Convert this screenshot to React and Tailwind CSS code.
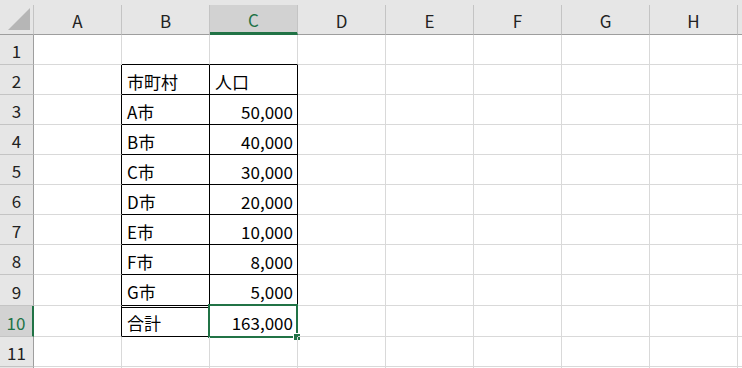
import React from "react";

const COLS = ["A", "B", "C", "D", "E", "F", "G", "H"];
const ROW_H = [30, 30, 30, 30, 30, 30, 30, 30, 31, 31, 30, 30];

const data = {
  2: ["市町村", "人口"],
  3: ["A市", "50,000"],
  4: ["B市", "40,000"],
  5: ["C市", "30,000"],
  6: ["D市", "20,000"],
  7: ["E市", "10,000"],
  8: ["F市", "8,000"],
  9: ["G市", "5,000"],
  10: ["合計", "163,000"],
};

const font = { fontFamily: '"Noto Sans CJK JP", "Noto Sans", sans-serif' };

function Cell({ row, colIdx }) {
  const inTable = row >= 2 && row <= 10;
  const col = COLS[colIdx];
  let right = "border-r-[#d9d9d9]";
  let bottom = "border-b-[#d9d9d9]";
  if ((col === "B" || col === "C") && inTable) {
    right = "border-r-black";
    bottom = "border-b-black";
  }
  if (col === "A" && inTable) right = "border-r-black";
  if ((col === "B" || col === "C") && row === 1) bottom = "border-b-black";

  let content = null;
  if (inTable && (col === "B" || col === "C")) {
    const text = data[row][col === "B" ? 0 : 1];
    const isNum = col === "C" && row >= 3;
    content = (
      <span
        className={`flex-1 text-[17px] text-black leading-none pt-[3px] ${
          isNum ? "text-right pr-[4px]" : "text-left pl-[5px]"
        }`}
      >
        {text}
      </span>
    );
  }

  const selected = col === "C" && row === 10;
  const doubleTop = col === "B" && row === 10;

  return (
    <div
      className={`relative w-[88px] shrink-0 flex items-center border-r border-b ${right} ${bottom} ${
        doubleTop ? "shadow-[inset_0_1px_0_#ffffff,inset_0_2px_0_#000000]" : ""
      }`}
    >
      {content}
      {selected && (
        <>
          <div className="absolute left-[-2px] top-[-2px] w-[90px] h-[34px] border-2 border-[#217346] pointer-events-none" />
          <div className="absolute left-[83px] top-[27px] w-[8px] h-[8px] bg-[#217346] border border-white pointer-events-none" />
        </>
      )}
    </div>
  );
}

export default function App() {
  return (
    <div className="w-[742px] h-[368px] overflow-hidden bg-white" style={font}>
      {/* column header */}
      <div className="flex h-[35px] bg-[#e6e6e6]">
        <div className="w-[34px] shrink-0 flex flex-col">
          <div className="h-[5px]" />
          <div className="flex-1 border-r border-b border-r-[#c4c4c4] border-b-[#9e9e9e] relative">
            <svg className="absolute left-0 top-[-5px]" width="33" height="34" viewBox="0 0 33 34">
              <polygon points="30,8 30,30 8,30" fill="#b6b6b6" />
            </svg>
          </div>
        </div>
        {COLS.map((c) => {
          const sel = c === "C";
          return (
            <div key={c} className="w-[88px] shrink-0 flex flex-col">
              <div className="h-[5px]" />
              <div
                className={`flex-1 flex items-center justify-center border-r border-r-[#c4c4c4] text-[17px] leading-none ${
                  sel
                    ? "bg-[#d2d2d2] border-b-[3px] border-b-[#217346] text-[#217346]"
                    : "border-b border-b-[#9e9e9e] text-[#222222]"
                }`}
              >
                <span className={sel ? "pt-[2px]" : "pt-[1px]"}>{c}</span>
              </div>
            </div>
          );
        })}
        <div className="flex-1 flex flex-col">
          <div className="h-[5px]" />
          <div className="flex-1 border-b border-b-[#9e9e9e]" />
        </div>
      </div>

      {/* rows */}
      {ROW_H.map((h, i) => {
        const row = i + 1;
        const sel = row === 10;
        const showLabel = row <= 11;
        return (
          <div key={row} className="flex" style={{ height: h }}>
            <div
              className={`w-[34px] shrink-0 flex items-center justify-center border-b border-b-[#c4c4c4] text-[17px] leading-none ${
                sel
                  ? "bg-[#d2d2d2] border-r-2 border-r-[#217346] text-[#217346]"
                  : "bg-[#e6e6e6] border-r border-r-[#9e9e9e] text-[#222222]"
              }`}
            >
              {showLabel && <span className="pt-[2px]">{row}</span>}
            </div>
            {COLS.map((c, ci) => (
              <Cell key={c} row={row} colIdx={ci} />
            ))}
            <div className="flex-1 border-b border-b-[#d9d9d9]" />
          </div>
        );
      })}
    </div>
  );
}
